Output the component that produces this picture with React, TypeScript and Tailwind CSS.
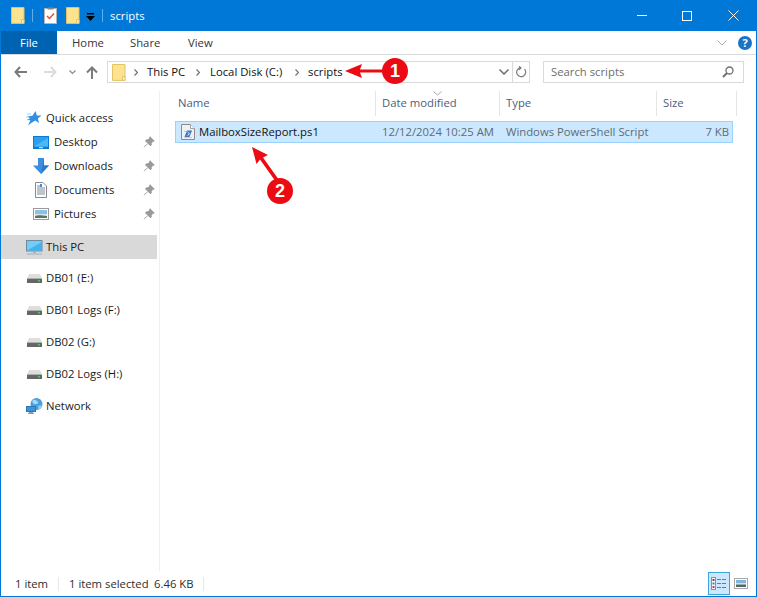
const Folder = ({ className = "" }: { className?: string }) => (
  <svg width="14" height="17" viewBox="0 0 14 17" className={className}>
    <path d="M.5.5h12.5v15.9H.5z" fill="#fde38f" stroke="#e3c463" />
    <path d="M10.5 12.5h2.5v3.9h-2.5z" fill="#fff3c4" stroke="#e3c463" />
  </svg>
);
const Pin = () => (
  <svg width="12" height="12" viewBox="0 0 12 12">
    <path d="M7 .8 11.2 5 9.8 5.6 8.3 7.1 8.2 9.2 7.2 9.6 2.6 5 3 4 5 3.8 6.5 2.3z M4.4 7.8 1 11.2" fill="#9a9a9a" stroke="#8f8f8f" strokeWidth=".8" />
  </svg>
);
const Drive = () => (
  <svg width="15" height="9" viewBox="0 0 15 9">
    <path d="M2 0h11l2 4.5H0z" fill="#dedede" />
    <rect x="0" y="4.500" width="15" height="4.500" fill="#666" />
    <rect x="0" y="4" width="15" height="1" fill="#b0b0b0" />
    <rect x="11" y="6" width="2" height="1.500" fill="#38d94a" />
  </svg>
);
const Star = () => (
  <svg width="16" height="15" viewBox="0 0 16 15">
    <path d="M9.5 0 10.8 4.4 15.5 4.6 11.8 7.5 13 12 9.2 9.4 5.2 12 2 14.5 4.4 9.3 .6 9 4 7.6 1.4 5.6 6.5 4.8z" fill="#2f8fe6" />
    <path d="M1 3h4M0 6h3" stroke="#9fd0f5" strokeWidth="1" />
  </svg>
);
const Desktop = () => (
  <svg width="16" height="13" viewBox="0 0 16 13">
    <rect width="16" height="13" fill="#0f79cf" />
    <path d="M1 1h14v9.5H1z" fill="#2ba0ef" />
    <path d="M1 10.5 15 2v8.5z" fill="#4fb7f5" />
    <rect x="6" y="11.2" width="4" height="1" fill="#e8f4fc" />
  </svg>
);
const Downloads = () => (
  <svg width="16" height="16" viewBox="0 0 16 16">
    <path d="M5 0h6v7.5h5L8 16 0 7.5h5z" fill="#3b8ee0" />
    <path d="M11 0v7.5h5L8 16z" fill="#2b78c9" />
  </svg>
);
const Documents = () => (
  <svg width="12" height="16" viewBox="0 0 12 16">
    <path d="M.5.5H8L11.5 4v11.5H.5z" fill="#fff" stroke="#8a8a8a" />
    <path d="M2 4h3M2 6h8M2 8h8M2 10h8M2 12h8" stroke="#7c8a99" />
    <rect x="5" y="2" width="2" height="3" fill="#3c8fd8" />
  </svg>
);
const Pictures = () => (
  <svg width="16" height="12" viewBox="0 0 16 12">
    <rect x=".5" y=".5" width="15" height="11" fill="#fff" stroke="#9a9a9a" />
    <rect x="2" y="2" width="12" height="4" fill="#8cc0e6" />
    <rect x="2" y="6" width="12" height="2" fill="#dbe6e6" />
    <path d="M2 8c3-1.500 7-.5 12 0v2H2z" fill="#5a7268" />
  </svg>
);
const Monitor = () => (
  <svg width="17" height="15" viewBox="0 0 17 15">
    <rect x=".5" y=".5" width="15.500" height="10.500" fill="#6fcdf8" stroke="#6e8a9c" />
    <path d="M1 10.500 16 2v8.500z" fill="#43b1ee" />
    <rect x="7" y="11.500" width="3" height="1.500" fill="#9fb0bd" />
    <rect x="1" y="13.500" width="15" height="1" fill="#9fb0bd" />
  </svg>
);
const NetworkIcon = () => (
  <svg width="17" height="16" viewBox="0 0 17 16">
    <circle cx="10.500" cy="6" r="6" fill="#4a9fdc" />
    <path d="M7 2c2-1 4 .5 5 2s-2 3-4 2-2-3-1-4z" fill="#a5d9f3" />
    <path d="M12 8c1.500-1 3-1 4 0-.5 2-2 3.500-3.500 3.800z" fill="#8ccbee" />
    <rect x=".5" y="8.500" width="9" height="5" fill="#3a94da" stroke="#2a78b8" />
    <rect x="3" y="14" width="4" height="1" fill="#8a9aa6" />
    <rect x="2" y="15" width="6" height="1" fill="#8a9aa6" />
  </svg>
);
const Ps = () => (
  <svg width="14" height="16" viewBox="0 0 14 16">
    <path d="M.5.5H9.500L13.500 4.500v11H.5z" fill="#eef1f4" stroke="#8c8c8c" />
    <path d="M9.500.5V4.500h4" fill="#fff" stroke="#a5a5a5" />
    <path d="M3 7.500h8M3 13.500h8" stroke="#c6d0da" />
    <path d="M3.500 13 6 6.500h5L8.500 13z" fill="#3f78c4" />
    <path d="M6.500 8 8.500 9.800 6.500 11.500" stroke="#fff" fill="none" strokeWidth=".9" />
  </svg>
);

const NavRow = ({ icon, label, pinned, indent, active, className = "" }: { icon: React.ReactNode; label: string; pinned?: boolean; indent?: boolean; active?: boolean; className?: string }) => (
  <div className={`flex h-6 w-[156px] items-center ${indent ? "pl-[32px]" : "pl-[24px]"} ${active ? "bg-[#d9d9d9]" : ""} ${className}`}>
    <div className={`flex h-full w-[21px] items-center justify-center ${indent ? "pr-[5px]" : "pr-[3px]"}`}>{icon}</div>
    <span className="mb-px text-[#1a1a1a]">{label}</span>
    {pinned && (
      <span className="ml-auto mr-[2px] flex">
        <Pin />
      </span>
    )}
  </div>
);

const ColHead = ({ label, className }: { label: string; className: string }) => (
  <div className={`flex h-full items-center border-r border-[#e5e5e5] pb-[2px] text-[#4c607a] ${className}`}>{label}</div>
);

export default function App() {
  return (
    <div
      className="relative flex h-[597px] w-[757px] flex-col overflow-hidden bg-white text-[11.3px] leading-none text-[#1a1a1a]"
      style={{ fontFamily: '"Open Sans", "Noto Sans", sans-serif' }}
    >
      {/* title bar */}
      <div className="flex h-[31px] shrink-0 items-center bg-[#0078d7] text-white">
        <Folder className="ml-[11px]" />
        <div className="ml-[7px] h-[13px] w-px bg-[#66aee7]" />
        <svg width="13" height="17" viewBox="0 0 13 17" className="ml-[11px]">
          <path d="M.5 1.500h12v15H.5z" fill="#fff" stroke="#b5b5b5" />
          <rect x="3.500" y=".5" width="6" height="2" fill="#888" />
          <path d="M3 9l2.500 2.500L10 6.500" fill="none" stroke="#e0522a" strokeWidth="1.500" />
        </svg>
        <Folder className="ml-[9px]" />
        <svg width="9" height="9" viewBox="0 0 9 9" className="ml-[6px] mt-[3px]">
          <rect x="1" y="0" width="7" height="1.500" fill="#000" />
          <path d="M0 3h9L4.500 8z" fill="#000" />
        </svg>
        <div className="ml-[7px] h-[13px] w-px bg-[#66aee7]" />
        <span className="ml-[7px]">scripts</span>
        <div className="ml-auto flex h-full items-center">
          <div className="mr-[35px] h-px w-[10px] bg-white" />
          <div className="mr-[36px] h-[10px] w-[10px] border border-white" />
          <svg width="11" height="11" viewBox="0 0 11 11" className="mr-[18px]">
            <path d="M.5.5l10 10M10.500.5l-10 10" stroke="#fff" fill="none" />
          </svg>
        </div>
      </div>

      {/* everything under title bar framed by 1px blue */}
      <div className="flex min-h-0 flex-1 flex-col border-x border-b border-[#0078d7]">
        {/* ribbon tabs */}
        <div className="flex h-[24px] shrink-0 border-b border-[#dadbdc]">
          <div className="flex h-[23px] w-[56px] items-center justify-center bg-[#0063b1] text-white">File</div>
          <div className="ml-[15px] flex h-[23px] w-[58px] items-center text-[#363636]">Home</div>
          <div className="flex h-[23px] w-[58px] items-center text-[#363636]">Share</div>
          <div className="flex h-[23px] items-center text-[#363636]">View</div>
          <div className="ml-auto flex h-[23px] items-center">
            <svg width="10" height="6" viewBox="0 0 10 6" className="mr-[11px]">
              <path d="M.5.5 5 5 9.500.5" fill="none" stroke="#a9a9a9" />
            </svg>
            <div className="mr-[4px] flex h-[14px] w-[14px] items-center justify-center rounded-full bg-[#1b72c4] text-[11px] font-bold text-white">?</div>
          </div>
        </div>

        {/* address row */}
        <div className="flex h-[36px] shrink-0 items-start pt-[6px]">
          <div className="flex h-[22px] w-[106px] shrink-0 items-center">
            <svg width="13" height="12" viewBox="0 0 13 12" className="ml-[13px]">
              <path d="M6 1 1.500 6 6 11M2 6h11" fill="none" stroke="#7a7a7a" strokeWidth="2" />
            </svg>
            <svg width="13" height="12" viewBox="0 0 13 12" className="ml-[17px]">
              <path d="M7 1l4.500 5L7 11M11 6H0" fill="none" stroke="#dcdcdc" strokeWidth="2" />
            </svg>
            <svg width="7" height="5" viewBox="0 0 7 5" className="ml-[12px]">
              <path d="M.5.5 3.500 3.500 6.500.5" fill="none" stroke="#8a8a8a" strokeWidth="1.200" />
            </svg>
            <svg width="12" height="13" viewBox="0 0 12 13" className="ml-[10px]">
              <path d="M1 6.500 6 1.500l5 5M6 2v11" fill="none" stroke="#7a7a7a" strokeWidth="2" />
            </svg>
          </div>
          <div className="flex h-[22px] w-[423px] shrink-0 items-center border border-[#d9d9d9]">
            <Folder className="ml-[4px]" />
            <Sep className="ml-[8px]" />
            <span className="ml-[9px] w-[41px] whitespace-nowrap text-[#111]">This PC</span>
            <Sep className="ml-[8px]" />
            <span className="ml-[10px] w-[75px] whitespace-nowrap text-[#111]">Local Disk (C:)</span>
            <Sep className="ml-[10px]" />
            <span className="ml-[9px] text-[#111]">scripts</span>
            <svg width="10" height="6" viewBox="0 0 10 6" className="ml-auto mr-[3px]">
              <path d="M.5.5 5 5 9.500.5" fill="none" stroke="#6d6d6d" strokeWidth="1.500" />
            </svg>
            <div className="flex h-full w-[17px] items-center justify-center border-l border-[#d9d9d9]">
              <svg width="11" height="12" viewBox="0 0 11 12">
                <path d="M4 1.800a4.500 4.500 0 1 0 4.500 1.300M3 .2 5 2 3 3.800" fill="none" stroke="#7d7d7d" strokeWidth="1.200" />
              </svg>
            </div>
          </div>
          <div className="ml-[13px] flex h-[22px] w-[201px] shrink-0 items-center border border-[#d9d9d9] pl-[7px] text-[#6d6d6d]">
            Search scripts
            <svg width="12" height="12" viewBox="0 0 12 12" className="ml-auto mr-[9px]">
              <circle cx="7.500" cy="4.500" r="3.500" fill="none" stroke="#6f6f6f" strokeWidth="1.300" />
              <path d="M5 7 1 11" stroke="#6f6f6f" strokeWidth="2" />
            </svg>
          </div>
        </div>

        {/* body */}
        <div className="flex min-h-0 flex-1">
          <div className="flex w-[159px] shrink-0 flex-col border-r border-[#f0f0f0] pt-[15px]">
            <NavRow icon={<Star />} label="Quick access" />
            <NavRow indent pinned icon={<Desktop />} label="Desktop" />
            <NavRow indent pinned icon={<Downloads />} label="Downloads" />
            <NavRow indent pinned icon={<Documents />} label="Documents" />
            <NavRow indent pinned icon={<Pictures />} label="Pictures" />
            <NavRow active icon={<Monitor />} label="This PC" className="mt-[9px]" />
            <NavRow icon={<Drive />} label="DB01 (E:)" className="mt-[7px]" />
            <NavRow icon={<Drive />} label="DB01 Logs (F:)" className="mt-[8px]" />
            <NavRow icon={<Drive />} label="DB02 (G:)" className="mt-[8px]" />
            <NavRow icon={<Drive />} label="DB02 Logs (H:)" className="mt-[8px]" />
            <NavRow icon={<NetworkIcon />} label="Network" className="mt-[8px]" />
          </div>
          <div className="flex min-w-0 flex-1 flex-col">
            <div className="relative flex h-[25px] shrink-0 pl-[11px]">
              <ColHead label="Name" className="w-[205px] pl-[7px]" />
              <ColHead label="Date modified" className="w-[124px] pl-[6px]" />
              <ColHead label="Type" className="w-[157px] pl-[6px]" />
              <ColHead label="Size" className="w-[80px] pl-[6px]" />
              <svg width="9" height="5" viewBox="0 0 9 5" className="absolute left-[273px] top-[0px]">
                <path d="M.5.5 4.500 4 8.500.5" fill="none" stroke="#a9a9a9" />
              </svg>
            </div>
            <div className="ml-[15px] mt-[5px] flex h-[22px] w-[558px] items-center border border-[#99d1ff] bg-[#cce8ff]">
              <div className="flex w-[206px] items-center pl-[5px]">
                <Ps />
                <span className="ml-[4px] text-[#111]">MailboxSizeReport.ps1</span>
              </div>
              <div className="w-[124px] whitespace-nowrap text-[#5f6b75]">12/12/2024 10:25 AM</div>
              <div className="w-[180px] whitespace-nowrap text-[#5f6b75]">Windows PowerShell Script</div>
              <div className="flex-1 pr-[3px] text-right text-[#5f6b75]">7 KB</div>
            </div>
          </div>
        </div>

        {/* status */}
        <div className="flex h-[25px] shrink-0 items-center text-[#2e2e2e]">
          <span className="ml-[14px] w-[34px] whitespace-nowrap">1 item</span>
          <div className="ml-[9px] h-[14px] w-px bg-[#e8e8e8]" />
          <span className="ml-[10px] w-[79px] whitespace-nowrap">1 item selected</span>
          <span className="ml-[6px] w-[40px] whitespace-nowrap">6.46 KB</span>
          <div className="ml-[9px] h-[14px] w-px bg-[#e8e8e8]" />
          <div className="ml-auto flex items-center pr-[7px]">
            <div className="flex h-[23px] w-[22px] items-center justify-center border border-[#3fa3dc] bg-[#cce8ff]">
              <svg width="16" height="13" viewBox="0 0 16 13">
                <rect x=".5" y=".5" width="4" height="12" fill="#fff" stroke="#8f8f8f" />
                <rect x="1.500" y="2" width="2" height="2" fill="#555" />
                <rect x="1.500" y="5.500" width="2" height="2" fill="#2a7bd0" />
                <rect x="1.500" y="9" width="2" height="2" fill="#d8323c" />
                <path d="M6 2.500h4M11 2.500h4M6 6.500h4M11 6.500h4M6 10.500h4M11 10.500h4" stroke="#777" />
              </svg>
            </div>
            <svg width="14" height="11" viewBox="0 0 14 11" className="ml-[4px] mr-[1px]">
              <rect x=".5" y=".5" width="13" height="10" fill="#fff" stroke="#a8a8a8" />
              <rect x="2" y="2" width="10" height="3" fill="#7fb6e0" />
              <rect x="2" y="5" width="10" height="1.500" fill="#d5e2e4" />
              <rect x="2" y="6.500" width="10" height="2.500" fill="#4f6a65" />
            </svg>
          </div>
        </div>
      </div>

      {/* annotations */}
      <svg width="757" height="597" className="pointer-events-none absolute left-0 top-0">
        <path d="M345 71 362 64 360 69.500H385V72.500H360L362 78Z" fill="#ec0b12" />
        <path d="M252 147 268 155 263 157.500 279 180 276 182 260 159.500 256.500 164Z" fill="#ec0b12" />
      </svg>
      <Badge n="1" className="left-[382px] top-[58px]" />
      <Badge n="2" className="left-[267px] top-[178px]" />
    </div>
  );
}

function Sep({ className = "" }: { className?: string }) {
  return (
    <svg width="4" height="7" viewBox="0 0 4 7" className={className}>
      <path d="M.5.5 3.500 3.500.5 6.500" fill="none" stroke="#6d6d6d" strokeWidth="1.200" />
    </svg>
  );
}

function Badge({ n, className }: { n: string; className: string }) {
  return (
    <div
      className={`absolute flex h-[26px] w-[26px] items-center justify-center rounded-full bg-[#ec0b12] text-[18px] font-bold text-white ${className}`}
      style={{ fontFamily: '"Liberation Sans", sans-serif' }}
    >
      {n}
    </div>
  );
}
